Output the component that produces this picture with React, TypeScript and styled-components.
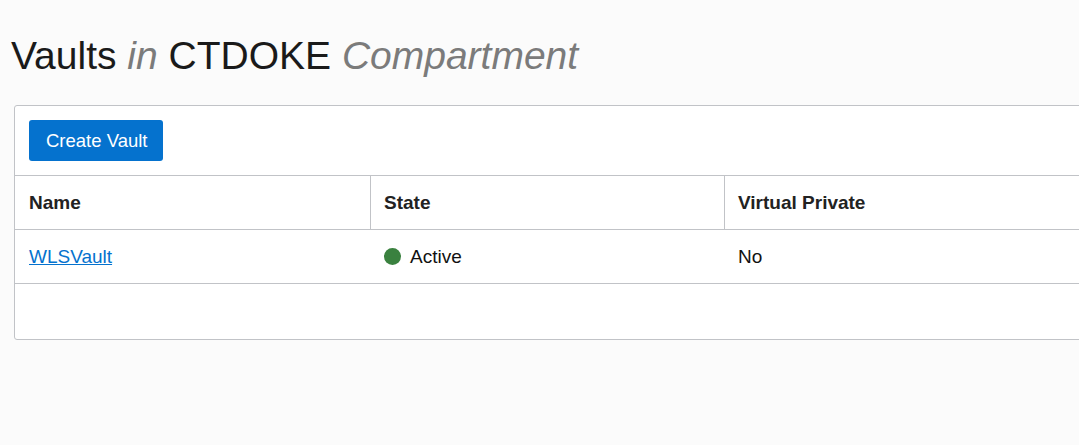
import React from "react";
import styled, { createGlobalStyle } from "styled-components";

const Global = createGlobalStyle`
  html, body { margin: 0; padding: 0; background: #fbfbfb; overflow: hidden; }
  body { font-family: "Liberation Sans", Arial, sans-serif; color: #161513; }
`;

const Page = styled.div`
  padding-top: 33px;
  width: 1079px;
  height: 445px;
  box-sizing: border-box;
`;

const Title = styled.h1`
  margin: 0 0 27px 11px;
  font-size: 39px;
  line-height: 45px;
  font-weight: 400;
  color: #1a1a1a;
  white-space: nowrap;
`;

const Muted = styled.em`
  color: #7b7b7b;
  font-style: italic;
`;

const Card = styled.section`
  margin-left: 14px;
  width: 1100px;
  background: #fff;
  border: 1px solid #c1c3c7;
  border-radius: 3px;
  padding-top: 14px;
  padding-bottom: 55px;
`;

const Toolbar = styled.div`
  display: flex;
  padding: 0 14px 14px;
`;

const Button = styled.button`
  font-family: "Liberation Sans", Arial, sans-serif;
  font-size: 18.5px;
  color: #fff;
  background: #0572ce;
  border: none;
  border-radius: 3px;
  height: 41px;
  padding: 0 16px 0 17px;
  cursor: pointer;
`;

const Row = styled.div<{ $header?: boolean }>`
  display: grid;
  grid-template-columns: 355px 354px 1fr;
  border-top: ${(p) => (p.$header ? "1px solid #c1c3c7" : "none")};
  border-bottom: 1px solid #c1c3c7;
  height: 53px;
  font-size: 19px;
  font-weight: ${(p) => (p.$header ? 700 : 400)};
  color: ${(p) => (p.$header ? "#222" : "#111")};
`;

const Cell = styled.div<{ $divider?: boolean }>`
  display: flex;
  align-items: center;
  gap: 9px;
  padding-left: ${(p) => (p.$divider ? "13px" : "14px")};
  border-left: ${(p) => (p.$divider ? "1px solid #c1c3c7" : "none")};
`;

const Link = styled.a`
  color: #0572ce;
  text-decoration: underline;
  cursor: pointer;
`;

const Dot = styled.span`
  width: 17px;
  height: 17px;
  border-radius: 50%;
  background: #3a813f;
  display: inline-block;
`;

export default function App() {
  return (
    <Page>
      <Global />
      <Title>
        Vaults <Muted>in</Muted> CTDOKE <Muted>Compartment</Muted>
      </Title>
      <Card>
        <Toolbar>
          <Button>Create Vault</Button>
        </Toolbar>
        <Row $header>
          <Cell>Name</Cell>
          <Cell $divider>State</Cell>
          <Cell $divider>Virtual Private</Cell>
        </Row>
        <Row>
          <Cell>
            <Link>WLSVault</Link>
          </Cell>
          <Cell>
            <Dot />
            Active
          </Cell>
          <Cell>No</Cell>
        </Row>
      </Card>
    </Page>
  );
}
